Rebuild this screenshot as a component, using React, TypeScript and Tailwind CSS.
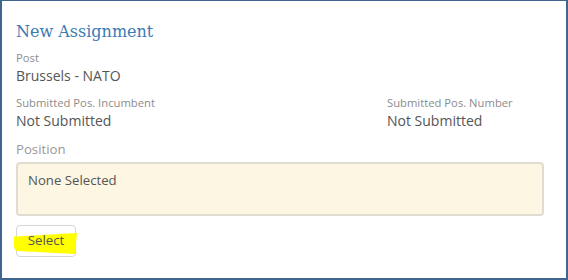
import React from "react";

export default function App() {
  return (
    <div className="w-[568px] h-[280px] bg-white">
      <div
        className="w-[568px] h-[280px] border-[#3f6590] border-t border-l-2 border-r-2 border-b-2 pl-[14px] pr-[22px] pt-[19px]"
        style={{ fontFamily: '"Open Sans", sans-serif' }}
      >
        <h2
          className="text-[16px] leading-[24px] text-[#3b7bb5]"
          style={{ fontFamily: '"DejaVu Serif", serif' }}
        >
          New Assignment
        </h2>
        <div className="mt-[6px] text-[11.25px] leading-[16px] text-[#8c8c8c]">Post</div>
        <div className="text-[14px] leading-[20px] text-[#555]">Brussels - NATO</div>
        <div className="mt-[9px] flex">
          <div className="w-[371px]">
            <div className="text-[11.25px] leading-[16px] text-[#8c8c8c]">Submitted Pos. Incumbent</div>
            <div className="text-[14px] leading-[20px] text-[#555]">Not Submitted</div>
          </div>
          <div>
            <div className="text-[11.25px] leading-[16px] text-[#8c8c8c]">Submitted Pos. Number</div>
            <div className="text-[14px] leading-[20px] text-[#555]">Not Submitted</div>
          </div>
        </div>
        <div className="mt-[8px] text-[13.2px] leading-[20px] text-[#999]">Position</div>
        <div className="mt-[3px] h-[54px] rounded-[4px] border-2 border-[#e0ddd0] bg-[#fcf6e3] px-[10px] pt-[6px] text-[13.2px] leading-[20px] text-[#555]">
          None Selected
        </div>
        <div className="mt-[9px]">
          <button className="relative h-[32px] w-[60px] rounded-[4px] border border-[#d5d5d5] bg-white text-[13.3px] text-[#555]">
            <svg className="absolute left-[-4px] top-[7px]" width="68" height="24" viewBox="0 0 68 24">
              <path d="M1,4 Q1,3 3,3.5 L64,0 L62,21 L4,18 Q1,17 1,12 Z" fill="#ffff00" />
            </svg>
            <span className="relative">Select</span>
          </button>
        </div>
      </div>
    </div>
  );
}
